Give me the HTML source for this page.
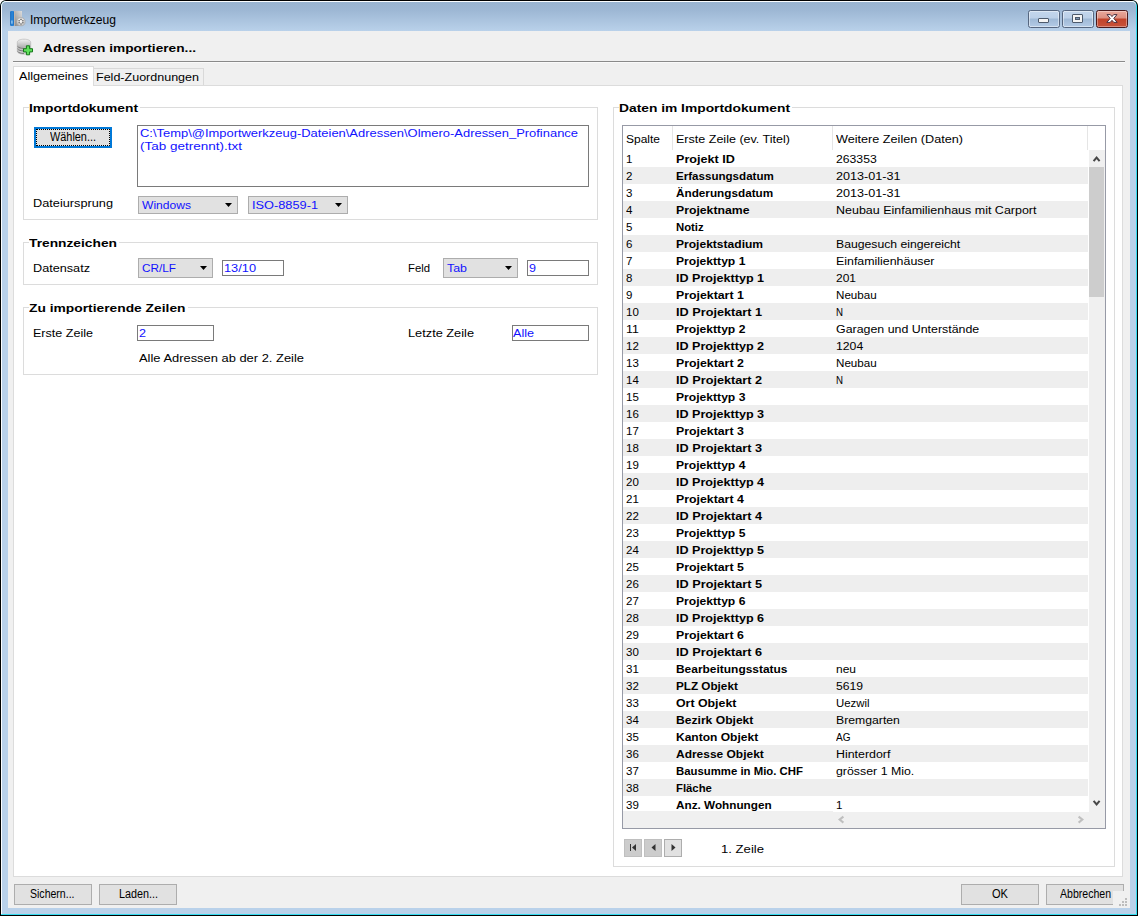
<!DOCTYPE html>
<html><head><meta charset="utf-8"><title>Importwerkzeug</title>
<style>
html,body{margin:0;padding:0;background:#fff;}
body{width:1138px;height:916px;position:relative;overflow:hidden;font-family:"Liberation Sans",sans-serif;font-size:12px;color:#000;}
.a{position:absolute;box-sizing:border-box;}
.t{position:absolute;white-space:nowrap;line-height:16px;height:16px;transform-origin:0 50%;}
.gb{position:absolute;box-sizing:border-box;border:1px solid #dcdcdc;}
.btn{position:absolute;box-sizing:border-box;border:1px solid #adadad;background:#e1e1e1;}
.inp{position:absolute;box-sizing:border-box;border:1px solid #7a7a7a;background:#fff;}
.dd{position:absolute;box-sizing:border-box;border:1px solid #adadad;background:#e1e1e1;}
.arr{position:absolute;width:0;height:0;border-left:4px solid transparent;border-right:4px solid transparent;border-top:4px solid #000;}
</style></head><body>
<div class="a" style="left:0;top:0;width:1138px;height:916px;background:#000;border-radius:6px 6px 0 0;"></div>
<div class="a" style="left:1px;top:1px;width:1136px;height:914px;background:#35dcf0;border-radius:5px 5px 0 0;"></div>
<div class="a" style="left:1px;top:1px;width:1135px;height:913px;background:#fbfdff;border-radius:5px 4px 0 0;"></div>
<div class="a" style="left:2px;top:2px;width:1134px;height:912px;background:linear-gradient(#99b4d1 0px,#9db7d4 8px,#b9d1ea 29px,#b9d1ea 100%);border-radius:4px 4px 0 0;"></div>
<div class="a" style="left:8px;top:31px;width:1122px;height:877px;background:#f0f0f0;"></div>
<div class="a" style="left:1028px;top:10px;width:32px;height:18px;border:1px solid #56667f;border-radius:2.5px;background:linear-gradient(#c3d6ec 0,#bcd0e8 44%,#9fb9d6 50%,#b4cbe6 100%);box-shadow:inset 0 0 0 1px rgba(255,255,255,.45);"></div><div class="a" style="left:1062px;top:10px;width:32px;height:18px;border:1px solid #56667f;border-radius:2.5px;background:linear-gradient(#c3d6ec 0,#bcd0e8 44%,#9fb9d6 50%,#b4cbe6 100%);box-shadow:inset 0 0 0 1px rgba(255,255,255,.45);"></div><div class="a" style="left:1096px;top:10px;width:32px;height:18px;border:1px solid #4a1a1c;border-radius:2.5px;background:linear-gradient(#e9a99c 0,#dc8f80 44%,#c1432a 50%,#c8523a 100%);box-shadow:inset 0 0 0 1px rgba(255,255,255,.35);"></div><div class="a" style="left:1038px;top:18px;width:11px;height:5px;background:#f4f4f4;border:1px solid #4d5a6c;border-radius:1px;"></div><div class="a" style="left:1072px;top:14px;width:11px;height:9px;background:#f4f4f4;border:1px solid #4d5a6c;border-radius:1px;"></div><div class="a" style="left:1075px;top:17px;width:5px;height:3px;background:#7e95b3;border:1px solid #4d5a6c;"></div><svg class="a" style="left:1105px;top:13px" width="14" height="11" viewBox="0 0 14 11"><path d="M2 1.600h3.300L7 3.600 8.700 1.600h3.300L8.800 5.400 12.200 9.400H8.800L7 7.300 5.200 9.400H1.800l3.400-4z" fill="#fff" stroke="#4a3140" stroke-width="1"/></svg><svg class="a" style="left:9px;top:10px" width="18" height="18" viewBox="0 0 18 18">
<defs><linearGradient id="g1" x1="1" y1="0" x2="0" y2="1"><stop offset="0" stop-color="#dedede"/><stop offset="1" stop-color="#888888"/></linearGradient>
<linearGradient id="g0" x1="0" y1="0" x2="1" y2="0"><stop offset="0" stop-color="#1666b8"/><stop offset=".5" stop-color="#2b88dc"/><stop offset="1" stop-color="#1a6fc2"/></linearGradient>
<radialGradient id="g3" cx=".45" cy=".4" r=".7"><stop offset="0" stop-color="#fff"/><stop offset="1" stop-color="#b9b9b9"/></radialGradient></defs>
<rect x="1.100" y="1" width="4" height="15" rx="1.200" fill="url(#g0)"/>
<rect x="5" y="1" width="8" height="15" fill="url(#g1)"/>
<rect x="5" y="1" width=".8" height="15" fill="#c9b9ad"/>
<rect x="2" y="10.500" width="1.800" height="3.200" fill="#7db8ea"/>
<circle cx="12" cy="11.700" r="4.100" fill="url(#g3)" stroke="#a6a6a6" stroke-width=".7"/>
<circle cx="12" cy="9.600" r=".75" fill="#5a5a5a"/><circle cx="13.900" cy="10.700" r=".75" fill="#5a5a5a"/><circle cx="13.900" cy="12.800" r=".75" fill="#5a5a5a"/>
<circle cx="12" cy="13.900" r=".75" fill="#5a5a5a"/><circle cx="10.100" cy="12.800" r=".75" fill="#5a5a5a"/><circle cx="10.100" cy="10.700" r=".75" fill="#5a5a5a"/>
</svg><svg class="a" style="left:16px;top:38px" width="19" height="19" viewBox="0 0 19 19">
<defs><linearGradient id="g2" x1="0" y1="0" x2="0" y2="1"><stop offset="0" stop-color="#f2f2f2"/><stop offset=".5" stop-color="#b5b5b5"/><stop offset="1" stop-color="#dadada"/></linearGradient></defs>
<path d="M1.3 4.2C1.3 2.4 4.3 1.2 8 1.2s6.7 1.2 6.7 3v9c0 1.8-3 3-6.7 3s-6.700-1.200-6.700-3z" fill="url(#g2)" stroke="#b8b8b8" stroke-width=".7"/>
<path d="M1.5 8.300c1 1.500 3.500 2.100 6.500 2.100M1.500 10.800c1 1.500 3.500 2.100 6.500 2.100M1.500 13.300c1 1.500 3.500 2.100 6.500 2.100" fill="none" stroke="#777" stroke-width="1"/>
<path d="M10.400 7.800h3.200v2.900h2.900v3.200h-2.900v2.900h-3.200v-2.900h-2.900v-3.200h2.900z" fill="#5fe05a" stroke="#15751a" stroke-width="1"/>
</svg><div class="a" style="left:13px;top:61px;width:1112px;height:1px;background:#8a8a8a;"></div><div class="a" style="left:13px;top:62px;width:1112px;height:1px;background:#fafafa;"></div><div class="a" style="left:13px;top:85px;width:1110px;height:792px;background:#fff;border:1px solid #dcdcdc;"></div><div class="a" style="left:93px;top:68px;width:111px;height:17px;background:#f0f0f0;border:1px solid #d9d9d9;border-bottom:none;"></div><div class="a" style="left:13px;top:66px;width:81px;height:20px;background:#fff;border:1px solid #dcdcdc;border-bottom:none;"></div><div class="gb" style="left:23px;top:107px;width:575px;height:113px;"></div><div class="a" style="left:29px;top:105px;width:111px;height:5px;background:#fff;"></div><div class="gb" style="left:23px;top:242px;width:575px;height:43px;"></div><div class="a" style="left:29px;top:240px;width:90px;height:5px;background:#fff;"></div><div class="gb" style="left:23px;top:307px;width:575px;height:68px;"></div><div class="a" style="left:29px;top:305px;width:158.5px;height:5px;background:#fff;"></div><div class="a" style="left:34px;top:127px;width:78px;height:21px;background:#e1e1e1;border:2px solid #0078d7;"></div><div class="a" style="left:36px;top:129px;width:74px;height:17px;border:1px dotted #000;"></div><div class="inp" style="left:137px;top:125px;width:452px;height:62px;"></div><div class="dd" style="left:138px;top:196px;width:100px;height:18px;"></div><svg class="a" style="left:225.0px;top:203px" width="7" height="4" viewBox="0 0 7 4"><path d="M0 0h7L3.5 4z" fill="#000"/></svg><div class="dd" style="left:248px;top:196px;width:100px;height:18px;"></div><svg class="a" style="left:335.0px;top:203px" width="7" height="4" viewBox="0 0 7 4"><path d="M0 0h7L3.5 4z" fill="#000"/></svg><div class="dd" style="left:138px;top:258px;width:75px;height:20px;"></div><svg class="a" style="left:200.0px;top:266px" width="7" height="4" viewBox="0 0 7 4"><path d="M0 0h7L3.5 4z" fill="#000"/></svg><div class="inp" style="left:222px;top:260px;width:62px;height:16px;"></div><div class="dd" style="left:443px;top:258px;width:75px;height:20px;"></div><svg class="a" style="left:505.0px;top:266px" width="7" height="4" viewBox="0 0 7 4"><path d="M0 0h7L3.5 4z" fill="#000"/></svg><div class="inp" style="left:527px;top:260px;width:62px;height:16px;"></div><div class="inp" style="left:137px;top:325px;width:77px;height:16px;"></div><div class="inp" style="left:512px;top:325px;width:77px;height:16px;"></div><div class="gb" style="left:613px;top:107px;width:502px;height:760px;"></div><div class="a" style="left:619px;top:105px;width:173px;height:5px;background:#fff;"></div><div class="a" style="left:622px;top:125px;width:484px;height:704px;background:#fff;border:1px solid #979aa6;"></div><div class="a" style="left:672px;top:126px;width:1px;height:24px;background:#e5e5e5;"></div><div class="a" style="left:832px;top:126px;width:1px;height:24px;background:#e5e5e5;"></div><div class="a" style="left:1087px;top:126px;width:1px;height:24px;background:#e5e5e5;"></div><div class="a" style="left:623px;top:167px;width:465px;height:17px;background:#eeeeee;"></div><div class="a" style="left:623px;top:201px;width:465px;height:17px;background:#eeeeee;"></div><div class="a" style="left:623px;top:235px;width:465px;height:17px;background:#eeeeee;"></div><div class="a" style="left:623px;top:269px;width:465px;height:17px;background:#eeeeee;"></div><div class="a" style="left:623px;top:303px;width:465px;height:17px;background:#eeeeee;"></div><div class="a" style="left:623px;top:337px;width:465px;height:17px;background:#eeeeee;"></div><div class="a" style="left:623px;top:371px;width:465px;height:17px;background:#eeeeee;"></div><div class="a" style="left:623px;top:405px;width:465px;height:17px;background:#eeeeee;"></div><div class="a" style="left:623px;top:439px;width:465px;height:17px;background:#eeeeee;"></div><div class="a" style="left:623px;top:473px;width:465px;height:17px;background:#eeeeee;"></div><div class="a" style="left:623px;top:507px;width:465px;height:17px;background:#eeeeee;"></div><div class="a" style="left:623px;top:541px;width:465px;height:17px;background:#eeeeee;"></div><div class="a" style="left:623px;top:575px;width:465px;height:17px;background:#eeeeee;"></div><div class="a" style="left:623px;top:609px;width:465px;height:17px;background:#eeeeee;"></div><div class="a" style="left:623px;top:643px;width:465px;height:17px;background:#eeeeee;"></div><div class="a" style="left:623px;top:677px;width:465px;height:17px;background:#eeeeee;"></div><div class="a" style="left:623px;top:711px;width:465px;height:17px;background:#eeeeee;"></div><div class="a" style="left:623px;top:745px;width:465px;height:17px;background:#eeeeee;"></div><div class="a" style="left:623px;top:779px;width:465px;height:17px;background:#eeeeee;"></div><div class="a" style="left:1089px;top:150px;width:16px;height:662px;background:#f0f0f0;"></div><div class="a" style="left:1089px;top:167px;width:15px;height:130px;background:#cdcdcd;"></div><svg class="a" style="left:1092px;top:155px" width="10" height="8" viewBox="0 0 10 8"><path d="M1.600 6.200L4.600 2.600 7.600 6.200" fill="none" stroke="#484848" stroke-width="2"/></svg><svg class="a" style="left:1092px;top:799px" width="10" height="8" viewBox="0 0 10 8"><path d="M1.600 1.800L4.600 5.400 7.600 1.800" fill="none" stroke="#484848" stroke-width="2"/></svg><div class="a" style="left:623px;top:811px;width:210px;height:17px;background:#f0f0f0;"></div><div class="a" style="left:833px;top:812px;width:272px;height:16px;background:#f0f0f0;"></div><svg class="a" style="left:837px;top:815px" width="8" height="10" viewBox="0 0 8 10"><path d="M6.400 1.600L2.600 4.600 6.400 7.600" fill="none" stroke="#bfbfbf" stroke-width="2"/></svg><svg class="a" style="left:1077px;top:815px" width="8" height="10" viewBox="0 0 8 10"><path d="M1.600 1.600L5.400 4.600 1.600 7.600" fill="none" stroke="#bfbfbf" stroke-width="2"/></svg><div class="a" style="left:624px;top:839px;width:18px;height:18px;background:#cccccc;border:1px solid #bfbfbf;"></div><div class="a" style="left:644px;top:839px;width:18px;height:18px;background:#cccccc;border:1px solid #bfbfbf;"></div><div class="a" style="left:664px;top:839px;width:18px;height:18px;background:#e1e1e1;border:1px solid #adadad;"></div><svg class="a" style="left:629px;top:843px" width="10" height="10" viewBox="0 0 10 10"><path d="M1.500 1v7" stroke="#333" stroke-width="1"/><path d="M7 1v7L3 4.500z" fill="#333"/></svg><svg class="a" style="left:648.5px;top:843px" width="10" height="10" viewBox="0 0 10 10"><path d="M6.500 1v7L2.500 4.500z" fill="#333"/></svg><svg class="a" style="left:668px;top:843px" width="10" height="10" viewBox="0 0 10 10"><path d="M3.500 1v7L7.500 4.500z" fill="#333"/></svg><div class="btn" style="left:14px;top:884px;width:78px;height:21px;"></div><div class="btn" style="left:99px;top:884px;width:78px;height:21px;"></div><div class="btn" style="left:961px;top:884px;width:78px;height:21px;"></div><div class="btn" style="left:1046px;top:884px;width:78px;height:21px;"></div><div class="a" style="left:1113px;top:891px;width:17px;height:17px;background:#f0f0f0;"></div><div class="a" style="left:1125px;top:898px;width:2px;height:2px;background:#bdbdbd;"></div><div class="a" style="left:1122px;top:901px;width:2px;height:2px;background:#bdbdbd;"></div><div class="a" style="left:1125px;top:901px;width:2px;height:2px;background:#bdbdbd;"></div><div class="a" style="left:1119px;top:904px;width:2px;height:2px;background:#bdbdbd;"></div><div class="a" style="left:1122px;top:904px;width:2px;height:2px;background:#bdbdbd;"></div><div class="a" style="left:1125px;top:904px;width:2px;height:2px;background:#bdbdbd;"></div><span class="t" style="left:29.7px;top:12px;font-size:12px;transform:scaleX(1.0073);">Importwerkzeug</span>
<span class="t" style="left:43px;top:39.5px;font-size:11.5px;font-weight:700;transform:scaleX(1.1910);">Adressen importieren...</span>
<span class="t" style="left:19px;top:68px;font-size:11.5px;transform:scaleX(1.1012);">Allgemeines</span>
<span class="t" style="left:96px;top:69px;font-size:11.5px;transform:scaleX(1.0885);">Feld-Zuordnungen</span>
<span class="t" style="left:29px;top:100.2px;font-size:11.5px;font-weight:700;transform:scaleX(1.2013);">Importdokument</span>
<span class="t" style="left:29px;top:235.2px;font-size:11.5px;font-weight:700;transform:scaleX(1.1973);">Trennzeichen</span>
<span class="t" style="left:29px;top:300.2px;font-size:11.5px;font-weight:700;transform:scaleX(1.2005);">Zu importierende Zeilen</span>
<span class="t" style="left:50px;top:128.7px;font-size:12px;transform:scaleX(0.9072);">Wählen...</span>
<span class="t" style="left:139.5px;top:125.19999999999999px;font-size:11.5px;color:#1212ff;transform:scaleX(1.1247);">C:\Temp\@Importwerkzeug-Dateien\Adressen\Olmero-Adressen_Profinance</span>
<span class="t" style="left:139.5px;top:138.2px;font-size:11.5px;color:#1212ff;transform:scaleX(1.1733);">(Tab getrennt).txt</span>
<span class="t" style="left:33px;top:195px;font-size:11.5px;transform:scaleX(1.1075);">Dateiursprung</span>
<span class="t" style="left:142px;top:197.0px;font-size:11.5px;color:#1212ff;transform:scaleX(1.0502);">Windows</span>
<span class="t" style="left:252px;top:197.0px;font-size:11.5px;color:#1212ff;transform:scaleX(1.1101);">ISO-8859-1</span>
<span class="t" style="left:33px;top:260px;font-size:11.5px;transform:scaleX(1.1008);">Datensatz</span>
<span class="t" style="left:142px;top:260.0px;font-size:11.5px;color:#1212ff;transform:scaleX(1.0230);">CR/LF</span>
<span class="t" style="left:224px;top:260px;font-size:11.5px;color:#1212ff;transform:scaleX(1.1118);">13/10</span>
<span class="t" style="left:408px;top:260px;font-size:11.5px;transform:scaleX(0.9832);">Feld</span>
<span class="t" style="left:447px;top:260.0px;font-size:11.5px;color:#1212ff;transform:scaleX(1.0783);">Tab</span>
<span class="t" style="left:529px;top:260px;font-size:11.5px;color:#1212ff;transform:scaleX(1.0927);">9</span>
<span class="t" style="left:33px;top:325px;font-size:11.5px;transform:scaleX(1.0915);">Erste Zeile</span>
<span class="t" style="left:139px;top:325px;font-size:11.5px;color:#1212ff;transform:scaleX(1.0927);">2</span>
<span class="t" style="left:139px;top:350px;font-size:11.5px;transform:scaleX(1.1222);">Alle Adressen ab der 2. Zeile</span>
<span class="t" style="left:408px;top:325px;font-size:11.5px;transform:scaleX(1.1101);">Letzte Zeile</span>
<span class="t" style="left:513px;top:325px;font-size:11.5px;color:#1212ff;transform:scaleX(1.0945);">Alle</span>
<span class="t" style="left:619px;top:100.2px;font-size:11.5px;font-weight:700;transform:scaleX(1.2001);">Daten im Importdokument</span>
<span class="t" style="left:626px;top:131.7px;font-size:10px;transform:scaleX(1.1989);">Spalte</span>
<span class="t" style="left:676px;top:131.7px;font-size:10px;transform:scaleX(1.2534);">Erste Zeile (ev. Titel)</span>
<span class="t" style="left:836px;top:131.7px;font-size:10px;transform:scaleX(1.2647);">Weitere Zeilen (Daten)</span>
<span class="t" style="left:626px;top:152.4px;font-size:10px;transform:scaleX(1.1506);">1</span>
<span class="t" style="left:676px;top:152.4px;font-size:10px;font-weight:700;transform:scaleX(1.2594);">Projekt ID</span>
<span class="t" style="left:836px;top:152.4px;font-size:10px;transform:scaleX(1.2195);">263353</span>
<span class="t" style="left:626px;top:169.4px;font-size:10px;transform:scaleX(1.1506);">2</span>
<span class="t" style="left:676px;top:169.4px;font-size:10px;font-weight:700;transform:scaleX(1.1578);">Erfassungsdatum</span>
<span class="t" style="left:836px;top:169.4px;font-size:10px;transform:scaleX(1.2589);">2013-01-31</span>
<span class="t" style="left:626px;top:186.4px;font-size:10px;transform:scaleX(1.1506);">3</span>
<span class="t" style="left:676px;top:186.4px;font-size:10px;font-weight:700;transform:scaleX(1.1742);">Änderungsdatum</span>
<span class="t" style="left:836px;top:186.4px;font-size:10px;transform:scaleX(1.2589);">2013-01-31</span>
<span class="t" style="left:626px;top:203.4px;font-size:10px;transform:scaleX(1.1506);">4</span>
<span class="t" style="left:676px;top:203.4px;font-size:10px;font-weight:700;transform:scaleX(1.2244);">Projektname</span>
<span class="t" style="left:836px;top:203.4px;font-size:10px;transform:scaleX(1.2481);">Neubau Einfamilienhaus mit Carport</span>
<span class="t" style="left:626px;top:220.4px;font-size:10px;transform:scaleX(1.1506);">5</span>
<span class="t" style="left:676px;top:220.4px;font-size:10px;font-weight:700;transform:scaleX(1.1328);">Notiz</span>
<span class="t" style="left:626px;top:237.4px;font-size:10px;transform:scaleX(1.1506);">6</span>
<span class="t" style="left:676px;top:237.4px;font-size:10px;font-weight:700;transform:scaleX(1.2055);">Projektstadium</span>
<span class="t" style="left:836px;top:237.4px;font-size:10px;transform:scaleX(1.2206);">Baugesuch eingereicht</span>
<span class="t" style="left:626px;top:254.39999999999998px;font-size:10px;transform:scaleX(1.1506);">7</span>
<span class="t" style="left:676px;top:254.39999999999998px;font-size:10px;font-weight:700;transform:scaleX(1.2122);">Projekttyp 1</span>
<span class="t" style="left:836px;top:254.39999999999998px;font-size:10px;transform:scaleX(1.2390);">Einfamilienhäuser</span>
<span class="t" style="left:626px;top:271.4px;font-size:10px;transform:scaleX(1.1506);">8</span>
<span class="t" style="left:676px;top:271.4px;font-size:10px;font-weight:700;transform:scaleX(1.2580);">ID Projekttyp 1</span>
<span class="t" style="left:836px;top:271.4px;font-size:10px;transform:scaleX(1.1985);">201</span>
<span class="t" style="left:626px;top:288.4px;font-size:10px;transform:scaleX(1.1506);">9</span>
<span class="t" style="left:676px;top:288.4px;font-size:10px;font-weight:700;transform:scaleX(1.2320);">Projektart 1</span>
<span class="t" style="left:836px;top:288.4px;font-size:10px;transform:scaleX(1.1618);">Neubau</span>
<span class="t" style="left:626px;top:305.4px;font-size:10px;transform:scaleX(1.1506);">10</span>
<span class="t" style="left:676px;top:305.4px;font-size:10px;font-weight:700;transform:scaleX(1.2697);">ID Projektart 1</span>
<span class="t" style="left:836px;top:305.4px;font-size:10px;transform:scaleX(0.9676);">N</span>
<span class="t" style="left:626px;top:322.4px;font-size:10px;transform:scaleX(1.2319);">11</span>
<span class="t" style="left:676px;top:322.4px;font-size:10px;font-weight:700;transform:scaleX(1.2122);">Projekttyp 2</span>
<span class="t" style="left:836px;top:322.4px;font-size:10px;transform:scaleX(1.2383);">Garagen und Unterstände</span>
<span class="t" style="left:626px;top:339.4px;font-size:10px;transform:scaleX(1.1506);">12</span>
<span class="t" style="left:676px;top:339.4px;font-size:10px;font-weight:700;transform:scaleX(1.2580);">ID Projekttyp 2</span>
<span class="t" style="left:836px;top:339.4px;font-size:10px;transform:scaleX(1.2225);">1204</span>
<span class="t" style="left:626px;top:356.4px;font-size:10px;transform:scaleX(1.1506);">13</span>
<span class="t" style="left:676px;top:356.4px;font-size:10px;font-weight:700;transform:scaleX(1.2320);">Projektart 2</span>
<span class="t" style="left:836px;top:356.4px;font-size:10px;transform:scaleX(1.1618);">Neubau</span>
<span class="t" style="left:626px;top:373.4px;font-size:10px;transform:scaleX(1.1506);">14</span>
<span class="t" style="left:676px;top:373.4px;font-size:10px;font-weight:700;transform:scaleX(1.2697);">ID Projektart 2</span>
<span class="t" style="left:836px;top:373.4px;font-size:10px;transform:scaleX(0.9676);">N</span>
<span class="t" style="left:626px;top:390.4px;font-size:10px;transform:scaleX(1.1506);">15</span>
<span class="t" style="left:676px;top:390.4px;font-size:10px;font-weight:700;transform:scaleX(1.2122);">Projekttyp 3</span>
<span class="t" style="left:626px;top:407.4px;font-size:10px;transform:scaleX(1.1506);">16</span>
<span class="t" style="left:676px;top:407.4px;font-size:10px;font-weight:700;transform:scaleX(1.2580);">ID Projekttyp 3</span>
<span class="t" style="left:626px;top:424.4px;font-size:10px;transform:scaleX(1.1506);">17</span>
<span class="t" style="left:676px;top:424.4px;font-size:10px;font-weight:700;transform:scaleX(1.2320);">Projektart 3</span>
<span class="t" style="left:626px;top:441.4px;font-size:10px;transform:scaleX(1.1506);">18</span>
<span class="t" style="left:676px;top:441.4px;font-size:10px;font-weight:700;transform:scaleX(1.2697);">ID Projektart 3</span>
<span class="t" style="left:626px;top:458.4px;font-size:10px;transform:scaleX(1.1506);">19</span>
<span class="t" style="left:676px;top:458.4px;font-size:10px;font-weight:700;transform:scaleX(1.2122);">Projekttyp 4</span>
<span class="t" style="left:626px;top:475.4px;font-size:10px;transform:scaleX(1.1506);">20</span>
<span class="t" style="left:676px;top:475.4px;font-size:10px;font-weight:700;transform:scaleX(1.2580);">ID Projekttyp 4</span>
<span class="t" style="left:626px;top:492.4px;font-size:10px;transform:scaleX(1.1506);">21</span>
<span class="t" style="left:676px;top:492.4px;font-size:10px;font-weight:700;transform:scaleX(1.2320);">Projektart 4</span>
<span class="t" style="left:626px;top:509.4px;font-size:10px;transform:scaleX(1.1506);">22</span>
<span class="t" style="left:676px;top:509.4px;font-size:10px;font-weight:700;transform:scaleX(1.2697);">ID Projektart 4</span>
<span class="t" style="left:626px;top:526.4px;font-size:10px;transform:scaleX(1.1506);">23</span>
<span class="t" style="left:676px;top:526.4px;font-size:10px;font-weight:700;transform:scaleX(1.2122);">Projekttyp 5</span>
<span class="t" style="left:626px;top:543.4px;font-size:10px;transform:scaleX(1.1506);">24</span>
<span class="t" style="left:676px;top:543.4px;font-size:10px;font-weight:700;transform:scaleX(1.2580);">ID Projekttyp 5</span>
<span class="t" style="left:626px;top:560.4px;font-size:10px;transform:scaleX(1.1506);">25</span>
<span class="t" style="left:676px;top:560.4px;font-size:10px;font-weight:700;transform:scaleX(1.2320);">Projektart 5</span>
<span class="t" style="left:626px;top:577.4px;font-size:10px;transform:scaleX(1.1506);">26</span>
<span class="t" style="left:676px;top:577.4px;font-size:10px;font-weight:700;transform:scaleX(1.2697);">ID Projektart 5</span>
<span class="t" style="left:626px;top:594.4px;font-size:10px;transform:scaleX(1.1506);">27</span>
<span class="t" style="left:676px;top:594.4px;font-size:10px;font-weight:700;transform:scaleX(1.2122);">Projekttyp 6</span>
<span class="t" style="left:626px;top:611.4px;font-size:10px;transform:scaleX(1.1506);">28</span>
<span class="t" style="left:676px;top:611.4px;font-size:10px;font-weight:700;transform:scaleX(1.2580);">ID Projekttyp 6</span>
<span class="t" style="left:626px;top:628.4px;font-size:10px;transform:scaleX(1.1506);">29</span>
<span class="t" style="left:676px;top:628.4px;font-size:10px;font-weight:700;transform:scaleX(1.2320);">Projektart 6</span>
<span class="t" style="left:626px;top:645.4px;font-size:10px;transform:scaleX(1.1506);">30</span>
<span class="t" style="left:676px;top:645.4px;font-size:10px;font-weight:700;transform:scaleX(1.2697);">ID Projektart 6</span>
<span class="t" style="left:626px;top:662.4px;font-size:10px;transform:scaleX(1.1506);">31</span>
<span class="t" style="left:676px;top:662.4px;font-size:10px;font-weight:700;transform:scaleX(1.1943);">Bearbeitungsstatus</span>
<span class="t" style="left:836px;top:662.4px;font-size:10px;transform:scaleX(1.1985);">neu</span>
<span class="t" style="left:626px;top:679.4px;font-size:10px;transform:scaleX(1.1506);">32</span>
<span class="t" style="left:676px;top:679.4px;font-size:10px;font-weight:700;transform:scaleX(1.1705);">PLZ Objekt</span>
<span class="t" style="left:836px;top:679.4px;font-size:10px;transform:scaleX(1.2135);">5619</span>
<span class="t" style="left:626px;top:696.4px;font-size:10px;transform:scaleX(1.1506);">33</span>
<span class="t" style="left:676px;top:696.4px;font-size:10px;font-weight:700;transform:scaleX(1.2350);">Ort Objekt</span>
<span class="t" style="left:836px;top:696.4px;font-size:10px;transform:scaleX(1.1374);">Uezwil</span>
<span class="t" style="left:626px;top:713.4px;font-size:10px;transform:scaleX(1.1506);">34</span>
<span class="t" style="left:676px;top:713.4px;font-size:10px;font-weight:700;transform:scaleX(1.2109);">Bezirk Objekt</span>
<span class="t" style="left:836px;top:713.4px;font-size:10px;transform:scaleX(1.2230);">Bremgarten</span>
<span class="t" style="left:626px;top:730.4px;font-size:10px;transform:scaleX(1.1506);">35</span>
<span class="t" style="left:676px;top:730.4px;font-size:10px;font-weight:700;transform:scaleX(1.2027);">Kanton Objekt</span>
<span class="t" style="left:836px;top:730.4px;font-size:10px;transform:scaleX(1.0032);">AG</span>
<span class="t" style="left:626px;top:747.4px;font-size:10px;transform:scaleX(1.1506);">36</span>
<span class="t" style="left:676px;top:747.4px;font-size:10px;font-weight:700;transform:scaleX(1.1966);">Adresse Objekt</span>
<span class="t" style="left:836px;top:747.4px;font-size:10px;transform:scaleX(1.2390);">Hinterdorf</span>
<span class="t" style="left:626px;top:764.4px;font-size:10px;transform:scaleX(1.1506);">37</span>
<span class="t" style="left:676px;top:764.4px;font-size:10px;font-weight:700;transform:scaleX(1.1371);">Bausumme in Mio. CHF</span>
<span class="t" style="left:836px;top:764.4px;font-size:10px;transform:scaleX(1.2358);">grösser 1 Mio.</span>
<span class="t" style="left:626px;top:781.4px;font-size:10px;transform:scaleX(1.1506);">38</span>
<span class="t" style="left:676px;top:781.4px;font-size:10px;font-weight:700;transform:scaleX(1.1329);">Fläche</span>
<span class="t" style="left:626px;top:798.4px;font-size:10px;transform:scaleX(1.1506);">39</span>
<span class="t" style="left:676px;top:798.4px;font-size:10px;font-weight:700;transform:scaleX(1.1735);">Anz. Wohnungen</span>
<span class="t" style="left:836px;top:798.4px;font-size:10px;transform:scaleX(1.1506);">1</span>
<span class="t" style="left:721px;top:840.6px;font-size:11.5px;transform:scaleX(1.1400);">1. Zeile</span>
<span class="t" style="left:30px;top:885.7px;font-size:12px;transform:scaleX(0.8777);">Sichern...</span>
<span class="t" style="left:118.5px;top:885.7px;font-size:12px;transform:scaleX(0.8991);">Laden...</span>
<span class="t" style="left:992.0px;top:885.7px;font-size:12px;transform:scaleX(0.9225);">OK</span>
<span class="t" style="left:1059.5px;top:885.7px;font-size:12px;transform:scaleX(0.8786);">Abbrechen</span>
</body></html>
